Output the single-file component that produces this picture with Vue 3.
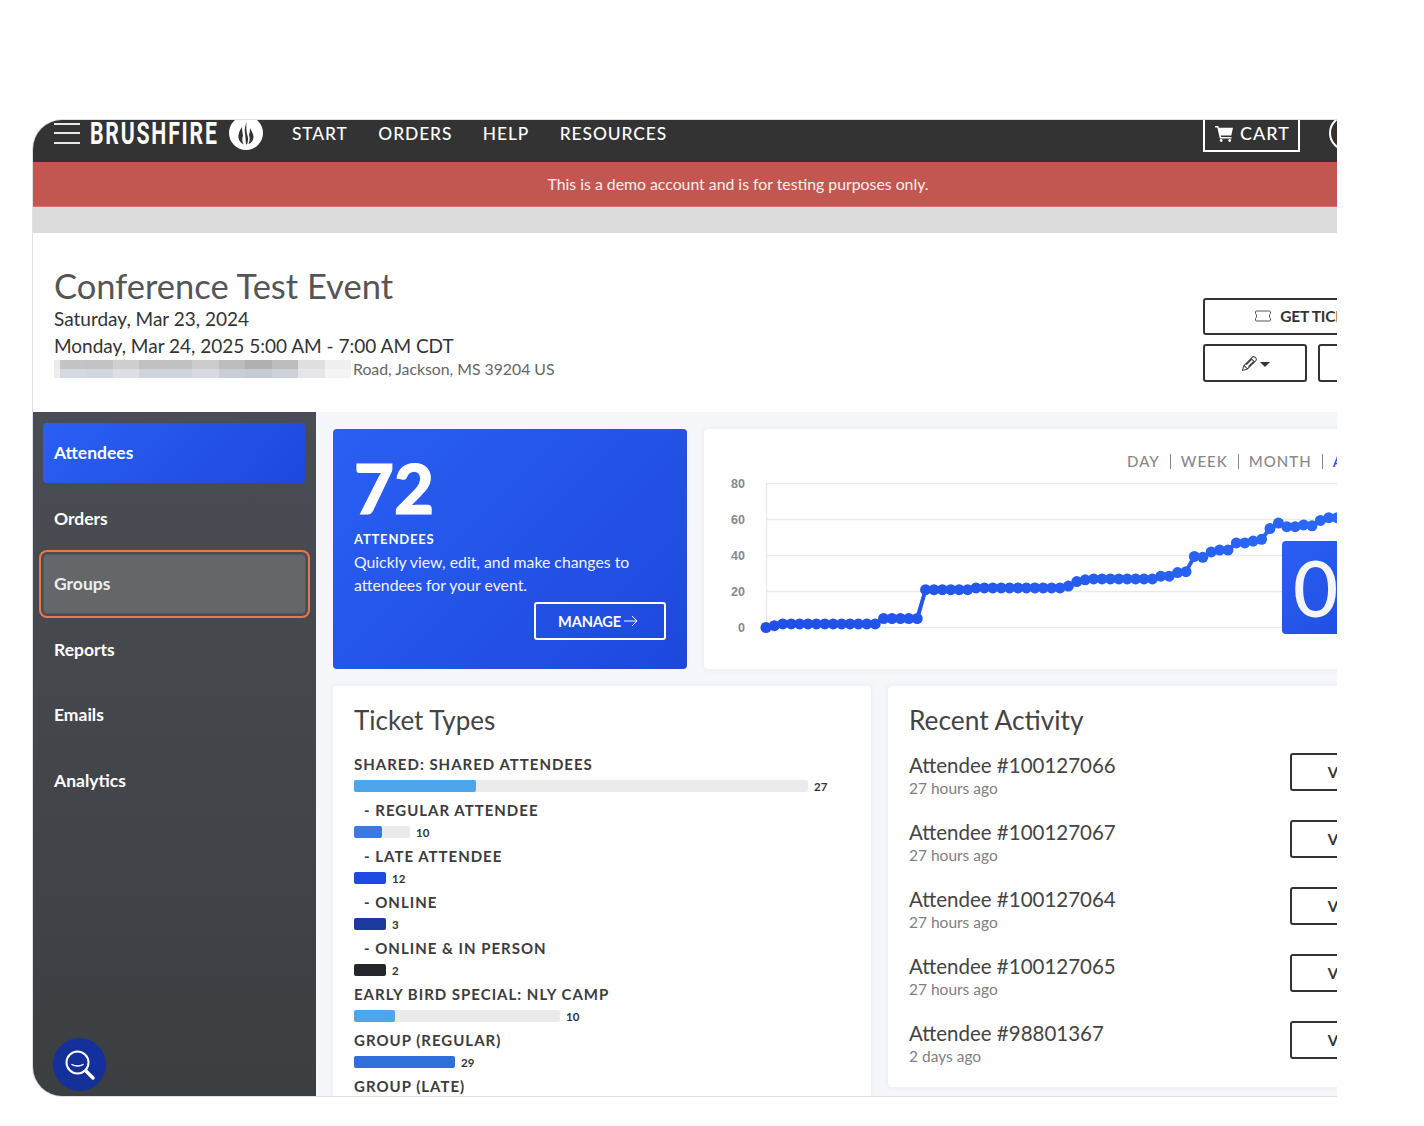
<template>
  <div class="frame">
    <div class="inner">
      <header class="topbar">
        <div class="topbar-row">
          <div class="burger"><span></span><span></span><span></span></div>
          <span class="brand">BRUSHFIRE</span>
          <svg class="logo" viewBox="0 0 34 34" width="34" height="34">
            <circle cx="17" cy="17" r="17" fill="#fff" />
            <path d="M13 11c-3 4-4 8-3.500 11 .5 3 2.500 5 5 6.500-1.500-3-1.500-6-.5-9-.5-3-1-6-1-8.500z" fill="#333" />
            <path d="M17.500 6c-1 4-2.500 7-1.500 11 .5 3 .5 7 1 11l1 .5c1-3 1.500-6 .5-9-1-3-1.500-8-1-13.500z" fill="#333" />
            <path d="M21 12c0 3-.5 5-1 7 1 3 1 6-.5 9 3-1 5-4 5-7 0-3-2-6-3.500-9z" fill="#333" />
          </svg>
          <nav class="nav">
            <a v-for="link in navLinks" :key="link">{{ link }}</a>
          </nav>
          <button class="cart">
            <svg viewBox="0 0 20 18" width="19" height="17">
              <path d="M0 1h3.400l.6 2H19l-1.800 8H6l.4 1.800h11v1.600H5L2.400 2.600H0z" fill="#fff" />
              <circle cx="6.500" cy="16.400" r="1.500" fill="#fff" />
              <circle cx="15.500" cy="16.400" r="1.500" fill="#fff" />
            </svg>
            CART
          </button>
          <div class="avatar"></div>
        </div>
      </header>

      <div class="alert">This is a demo account and is for testing purposes only.</div>
      <div class="band"></div>

      <section class="event">
        <div class="event-info">
          <h1>Conference Test Event</h1>
          <p class="event-date">Saturday, Mar 23, 2024</p>
          <p class="event-date">Monday, Mar 24, 2025 5:00 AM - 7:00 AM CDT</p>
          <div class="event-address">
            <div class="mosaic">
              <div class="mosaic-row">
                <i v-for="(c, i) in mosaicTop" :key="i" :style="{ background: c }"></i>
              </div>
              <div class="mosaic-row">
                <i v-for="(c, i) in mosaicBottom" :key="i" :style="{ background: c }"></i>
              </div>
            </div>
            <span>Road, Jackson, MS 39204 US</span>
          </div>
        </div>
        <div class="event-actions">
          <button class="btn-outline btn-tickets">
            <svg viewBox="0 0 18 12" width="18" height="12">
              <path d="M2.500 1h13c.6 0 1 .4 1 1v1.600c-1.400.6-1.400 4.200 0 4.800V10c0 .6-.4 1-1 1h-13c-.6 0-1-.4-1-1V8.400c1.400-.6 1.400-4.200 0-4.800V2c0-.6.4-1 1-1z" fill="none" stroke="#555" stroke-width="1" />
            </svg>
            GET TICKETS
          </button>
          <div class="action-row">
            <button class="btn-outline btn-small">
              <svg viewBox="0 0 16 16" width="17" height="17">
                <path d="M1.500 14.500l1-4.200 8.300-8.300c.6-.6 1.600-.6 2.200 0l1 1c.6.6.6 1.600 0 2.200l-8.300 8.300zM9.500 3.300l3.200 3.200M3 10l3 3M5 9l5-5M7 11l5-5" fill="none" stroke="#444" stroke-width="1" />
              </svg>
              <span class="caret"></span>
            </button>
            <button class="btn-outline btn-small"></button>
          </div>
        </div>
      </section>

      <div class="main">
        <aside class="sidebar">
          <a
            v-for="item in sideItems"
            :key="item"
            :class="['side-item', { active: item === 'Attendees', focused: item === 'Groups' }]"
          >{{ item }}</a>
          <button class="search-fab">
            <svg viewBox="0 0 32 32" width="32" height="32">
              <circle cx="13.500" cy="13.500" r="11" fill="none" stroke="#fff" stroke-width="2" />
              <path d="M8 15.500c3 2 8 2 11 0" fill="none" stroke="#fff" stroke-width="1.500" stroke-linecap="round" />
              <path d="M22 22l7 7" stroke="#fff" stroke-width="3.500" stroke-linecap="round" />
            </svg>
          </button>
        </aside>

        <div class="content">
          <div class="top-row">
            <div class="hero">
              <div class="hero-number">72</div>
              <div class="hero-label">ATTENDEES</div>
              <p class="hero-text">Quickly view, edit, and make changes to attendees for your event.</p>
              <button class="manage">
                MANAGE
                <svg viewBox="0 0 14 12" width="14" height="12">
                  <path d="M0 6h13M8 1l5 5-5 5" fill="none" stroke="#fff" stroke-width="1" />
                </svg>
              </button>
            </div>

            <div class="chart-card">
              <div class="tabs">
                <span>DAY</span><b></b><span>WEEK</span><b></b><span>MONTH</span><b></b><span class="tab-on">ALL TIME</span>
              </div>
              <svg class="chart" viewBox="0 0 722 190" width="722" height="190">
                <defs>
                  <linearGradient id="lineColor" gradientUnits="userSpaceOnUse" x1="60" y1="0" x2="640" y2="0">
                    <stop offset="0" stop-color="#1f4fe6" />
                    <stop offset="1" stop-color="#2b68f7" />
                  </linearGradient>
                </defs>
                <g v-for="tick in ticks" :key="tick">
                  <line x1="62" x2="722" :y1="tickY(tick)" :y2="tickY(tick)" stroke="#e9e9e9" stroke-width="1.300" />
                  <text x="41" :y="tickY(tick) + 4.500" text-anchor="end" class="tick">{{ tick }}</text>
                </g>
                <line x1="62.500" x2="62.500" :y1="tickY(80)" :y2="tickY(0)" stroke="#e9e9e9" stroke-width="1.300" />
                <polyline :points="linePoints" fill="none" stroke="url(#lineColor)" stroke-width="4" />
                <circle v-for="p in points" :key="p.x" :cx="p.x" :cy="p.y" r="5.500" fill="url(#lineColor)" />
              </svg>
              <div class="zero-card">0</div>
            </div>
          </div>

          <div class="bottom-row">
            <div class="panel tickets">
              <h2>Ticket Types</h2>
              <div v-for="t in ticketTypes" :key="t.name" class="ticket">
                <div :class="['ticket-name', { sub: t.sub }]">{{ t.sub ? '- ' : '' }}{{ t.name }}</div>
                <div class="ticket-bar">
                  <div class="track" :style="{ width: t.track + 'px' }">
                    <div class="fill" :style="{ width: t.fill + 'px', background: t.color }"></div>
                  </div>
                  <span>{{ t.count }}</span>
                </div>
              </div>
            </div>

            <div class="panel recent">
              <h2>Recent Activity</h2>
              <div v-for="a in activity" :key="a.name" class="activity">
                <div>
                  <div class="activity-name">{{ a.name }}</div>
                  <div class="activity-time">{{ a.time }}</div>
                </div>
                <button class="btn-outline btn-view">VIEW</button>
              </div>
            </div>
          </div>
        </div>
      </div>
    </div>
  </div>
</template>

<script setup>
const navLinks = ['START', 'ORDERS', 'HELP', 'RESOURCES']
const sideItems = ['Attendees', 'Orders', 'Groups', 'Reports', 'Emails', 'Analytics']

const mosaicTop = ['#ebebeb', '#c4c4c4', '#c3c3c3', '#cfcfcf', '#c1c1c1', '#c1c1c1', '#cbcbcb', '#bcbcbc', '#b0b0b0', '#bcbcbc', '#dfdfdf', '#f0f0f0']
const mosaicBottom = ['#eceef1', '#d5d9e0', '#d2d6de', '#dcdfe4', '#d0d4dc', '#d0d4dc', '#d6d9e0', '#c9cdd6', '#c6cad3', '#cdd1d9', '#e4e6ea', '#f3f4f6']

const ticks = [0, 20, 40, 60, 80]
const tickY = (v) => 152.5 - v * 1.8

// values read off the line, one per day
const values = [
  0, 1, 2, 2, 2, 2, 2, 2, 2, 2, 2, 2, 2, 2, 5, 5, 5, 5, 5,
  21, 21, 21, 21, 21, 21, 22, 22, 22, 22, 22, 22, 22, 22, 22, 22, 22,
  23, 25.5, 26.5, 27, 27, 27, 27, 27, 27, 27, 27, 28.5, 28.5, 30.5, 31,
  39.5, 39, 42, 43, 43, 47, 47, 48, 49, 55, 58, 56, 56, 57, 56.5, 59.5, 61, 61, 62, 62,
]
const points = values.map((v, i) => ({ x: 62 + i * 8.4, y: tickY(v) }))
const linePoints = points.map((p) => `${p.x},${p.y}`).join(' ')

const ticketTypes = [
  { name: 'SHARED: SHARED ATTENDEES', track: 454, fill: 122, color: '#4da6ec', count: 27 },
  { name: 'REGULAR ATTENDEE', sub: true, track: 56, fill: 28, color: '#3b78e0', count: 10 },
  { name: 'LATE ATTENDEE', sub: true, track: 32, fill: 32, color: '#1d4ae0', count: 12 },
  { name: 'ONLINE', sub: true, track: 32, fill: 32, color: '#1c3a9e', count: 3 },
  { name: 'ONLINE & IN PERSON', sub: true, track: 32, fill: 32, color: '#23262b', count: 2 },
  { name: 'EARLY BIRD SPECIAL: NLY CAMP', track: 206, fill: 41, color: '#4da6ec', count: 10 },
  { name: 'GROUP (REGULAR)', track: 101, fill: 101, color: '#2f6fdc', count: 29 },
  { name: 'GROUP (LATE)', track: 60, fill: 60, color: '#1d4ae0', count: 8 },
]

const activity = [
  { name: 'Attendee #100127066', time: '27 hours ago' },
  { name: 'Attendee #100127067', time: '27 hours ago' },
  { name: 'Attendee #100127064', time: '27 hours ago' },
  { name: 'Attendee #100127065', time: '27 hours ago' },
  { name: 'Attendee #98801367', time: '2 days ago' },
]
</script>

<style>
html,
body {
  margin: 0;
  background: #fff;
}
</style>

<style scoped>
.frame {
  box-sizing: border-box;
  width: 1305px;
  height: 978px;
  margin: 119px 0 0 32px;
  border: 1px solid #dfdfe6;
  border-right: 0;
  border-radius: 30px 0 0 30px;
  overflow: hidden;
  font-family: Lato, "Liberation Sans", sans-serif;
  color: #333;
}

.inner {
  width: 1410px;
}

button {
  font-family: inherit;
  background: none;
  cursor: pointer;
}

.topbar {
  height: 42px;
  background: #333;
  overflow: hidden;
}

.topbar-row {
  display: flex;
  align-items: center;
  height: 42px;
  margin-top: -8px;
  padding-left: 21px;
}

.burger {
  display: flex;
  flex-direction: column;
  justify-content: space-between;
  width: 26px;
  height: 21px;
}

.burger span {
  height: 2px;
  background: #e8e8e8;
}

.brand {
  flex: none;
  width: 129px;
  margin-left: 10px;
  font-family: Roboto, "Liberation Sans", sans-serif;
  font-size: 31px;
  font-weight: 700;
  letter-spacing: 2.6px;
  color: #fff;
  line-height: 1;
  white-space: nowrap;
  transform: scaleX(0.685);
  transform-origin: left center;
}

.logo {
  flex: none;
  margin-left: 10px;
}

.nav {
  display: flex;
  gap: 30.500px;
  margin-left: 29px;
}

.nav a {
  font-size: 17.400px;
  font-weight: 500;
  letter-spacing: 0.9px;
  color: #fff;
}

.cart {
  display: flex;
  align-items: center;
  gap: 6px;
  box-sizing: border-box;
  width: 97px;
  height: 38px;
  margin-left: auto;
  padding: 0 0 0 10px;
  border: 2px solid #fff;
  font-size: 18px;
  font-weight: 500;
  letter-spacing: 1px;
  color: #fff;
}

.avatar {
  box-sizing: border-box;
  flex: none;
  width: 36px;
  height: 36px;
  margin-left: 29px;
  margin-right: 78px;
  border: 2px solid #fff;
  border-radius: 50%;
  background: #3a3029;
}

.alert {
  height: 45px;
  line-height: 44px;
  box-sizing: border-box;
  border-bottom: 1px solid #d9716c;
  background: #c25752;
  text-align: center;
  font-size: 15.800px;
  color: #fbeeee;
}

.band {
  height: 26px;
  background: #dcdcdc;
}

.event {
  display: flex;
  justify-content: space-between;
  box-sizing: border-box;
  height: 179px;
  padding: 34px 16px 0 21px;
  background: #fff;
}

.event h1 {
  margin: 0;
  font-size: 34.500px;
  font-weight: 400;
  line-height: 38px;
  color: #555;
}

.event-date {
  margin: 0;
  font-size: 19px;
  line-height: 27px;
  color: #333;
}

.event-address {
  display: flex;
  align-items: center;
  gap: 2px;
  font-size: 15.800px;
  color: #666;
}

.mosaic {
  width: 297px;
}

.mosaic-row {
  display: flex;
  height: 9px;
}

.mosaic-row i {
  flex: 1 1 0;
}

.mosaic-row i:first-child {
  flex: 0 0 6px;
}

.event-actions {
  display: flex;
  flex-direction: column;
  gap: 9px;
  width: 224px;
  padding-top: 31px;
}

.btn-outline {
  box-sizing: border-box;
  border: 2px solid #333;
  border-radius: 3px;
  background: #fff;
}

.btn-tickets {
  display: flex;
  align-items: center;
  justify-content: center;
  gap: 8px;
  height: 37px;
  padding: 0 4px 2px 0;
  font-size: 15.500px;
  font-weight: 700;
  letter-spacing: -0.2px;
  color: #333;
}

.action-row {
  display: flex;
  gap: 11px;
}

.btn-small {
  display: flex;
  align-items: center;
  justify-content: center;
  gap: 2px;
  flex: 0 0 104px;
  height: 38px;
}

.caret {
  width: 0;
  height: 0;
  margin-top: 3px;
  border: 5px solid transparent;
  border-top-color: #333;
  border-bottom: 0;
}

.main {
  display: flex;
  background: #f5f7fb;
}

.sidebar {
  position: relative;
  flex: none;
  box-sizing: border-box;
  width: 283px;
  height: 684px;
  padding: 11px 11px 0 10px;
  background: linear-gradient(180deg, #4a4e54, #3b3f42);
}

.side-item {
  display: flex;
  align-items: center;
  box-sizing: border-box;
  height: 60px;
  margin-bottom: 5.600px;
  padding: 0 0 1px 11px;
  border-radius: 4px;
  font-size: 17.500px;
  font-weight: 700;
  color: #fff;
}

.side-item.active {
  background: linear-gradient(135deg, #2a5ff3, #1e48dd);
}

.side-item.focused {
  margin-right: -1px;
  padding-left: 10px;
  background: #63676a;
  border: 1px solid #55585c;
  box-shadow: 0 0 0 2px #4a4e54, 0 0 0 4px #ef7648;
  color: #eee;
}

.search-fab {
  position: absolute;
  left: 20px;
  bottom: 5px;
  display: flex;
  align-items: center;
  justify-content: center;
  width: 53px;
  height: 53px;
  padding: 0;
  border: 0;
  border-radius: 50%;
  background: #14309a;
}

.content {
  flex: none;
  width: 1127px;
  box-sizing: border-box;
  padding: 17px 17px 0;
  height: 684px;
  overflow: hidden;
}

.top-row {
  display: flex;
  gap: 17px;
  height: 240px;
}

.hero {
  position: relative;
  box-sizing: border-box;
  flex: 0 0 354px;
  padding: 24px 21px 0;
  border-radius: 4px;
  background: linear-gradient(135deg, #2a5ff3, #1e48dd);
  color: #fff;
}

.hero-number {
  font-size: 69px;
  font-weight: 900;
  line-height: 70px;
  -webkit-text-stroke: 1px #fff;
}

.hero-label {
  margin-top: 6px;
  font-size: 13px;
  font-weight: 700;
  letter-spacing: 0.8px;
  line-height: 20px;
}

.hero-text {
  width: 300px;
  margin: 1px 0 0;
  font-size: 15.800px;
  line-height: 23px;
  color: #f0f4ff;
}

.manage {
  position: absolute;
  right: 21px;
  bottom: 29px;
  display: flex;
  align-items: center;
  justify-content: center;
  gap: 3px;
  box-sizing: border-box;
  width: 132px;
  height: 38px;
  padding: 0 4px 0 0;
  border: 2px solid #fff;
  border-radius: 3px;
  font-size: 14.600px;
  font-weight: 700;
  letter-spacing: -0.2px;
  color: #fff;
}

.chart-card {
  position: relative;
  flex: 0 0 722px;
  border-radius: 4px;
  background: #fff;
  box-shadow: 0 0 6px rgba(60, 70, 100, 0.08);
}

.tabs {
  display: flex;
  align-items: center;
  justify-content: flex-end;
  gap: 10px;
  height: 20px;
  margin-top: 22px;
  padding-right: 21px;
  font-size: 15px;
  font-weight: 500;
  letter-spacing: 1px;
  color: #888;
}

.tabs b {
  width: 1px;
  height: 15px;
  background: #888;
}

.tab-on {
  color: #1f4fe6;
}

.chart {
  display: block;
  margin-top: 4px;
}

.tick {
  font-family: "Liberation Sans", Arial, sans-serif;
  font-size: 12.500px;
  font-weight: 700;
  fill: #888;
}

.zero-card {
  position: absolute;
  top: 112px;
  left: 578px;
  width: 124px;
  height: 93px;
  padding-left: 11px;
  box-sizing: border-box;
  border-radius: 4px;
  background: linear-gradient(135deg, #2a5ff3, #1e48dd);
  font-size: 78px;
  line-height: 93px;
  font-weight: 500;
  color: #f5f5f5;
}

.bottom-row {
  display: flex;
  align-items: flex-start;
  gap: 17px;
  margin-top: 17px;
}

.panel {
  box-sizing: border-box;
  flex: 0 0 538px;
  padding: 20px 21px 28px;
  border-radius: 4px;
  background: #fff;
  box-shadow: 0 0 6px rgba(60, 70, 100, 0.08);
}

.panel h2 {
  margin: 0;
  font-size: 26px;
  font-weight: 400;
  line-height: 28px;
  color: #444;
}

.tickets h2 {
  margin-bottom: 20px;
}

.ticket {
  margin-bottom: 8px;
}

.ticket-name {
  font-size: 15px;
  font-weight: 700;
  letter-spacing: 1px;
  line-height: 20px;
  margin-bottom: 6px;
  color: #3c3c3c;
}

.ticket-name.sub {
  padding-left: 10px;
}

.ticket-bar {
  display: flex;
  align-items: center;
  gap: 6px;
  height: 12px;
  font-size: 11.500px;
  font-weight: 700;
  color: #333;
}

.track {
  height: 12px;
  border-radius: 2px;
  background: #ebebeb;
}

.fill {
  height: 12px;
  border-radius: 2px;
}

.recent h2 {
  margin-bottom: 19px;
  font-size: 26.300px;
}

.activity {
  display: flex;
  justify-content: space-between;
  height: 38px;
  margin-bottom: 29px;
}

.activity:last-child {
  margin-bottom: 0;
}

.activity-name {
  font-size: 20.500px;
  line-height: 24px;
  color: #444;
}

.activity-time {
  font-size: 15.500px;
  line-height: 22px;
  color: #808080;
}

.btn-view {
  width: 115px;
  height: 38px;
  font-size: 15px;
  font-weight: 700;
  color: #333;
}
</style>
